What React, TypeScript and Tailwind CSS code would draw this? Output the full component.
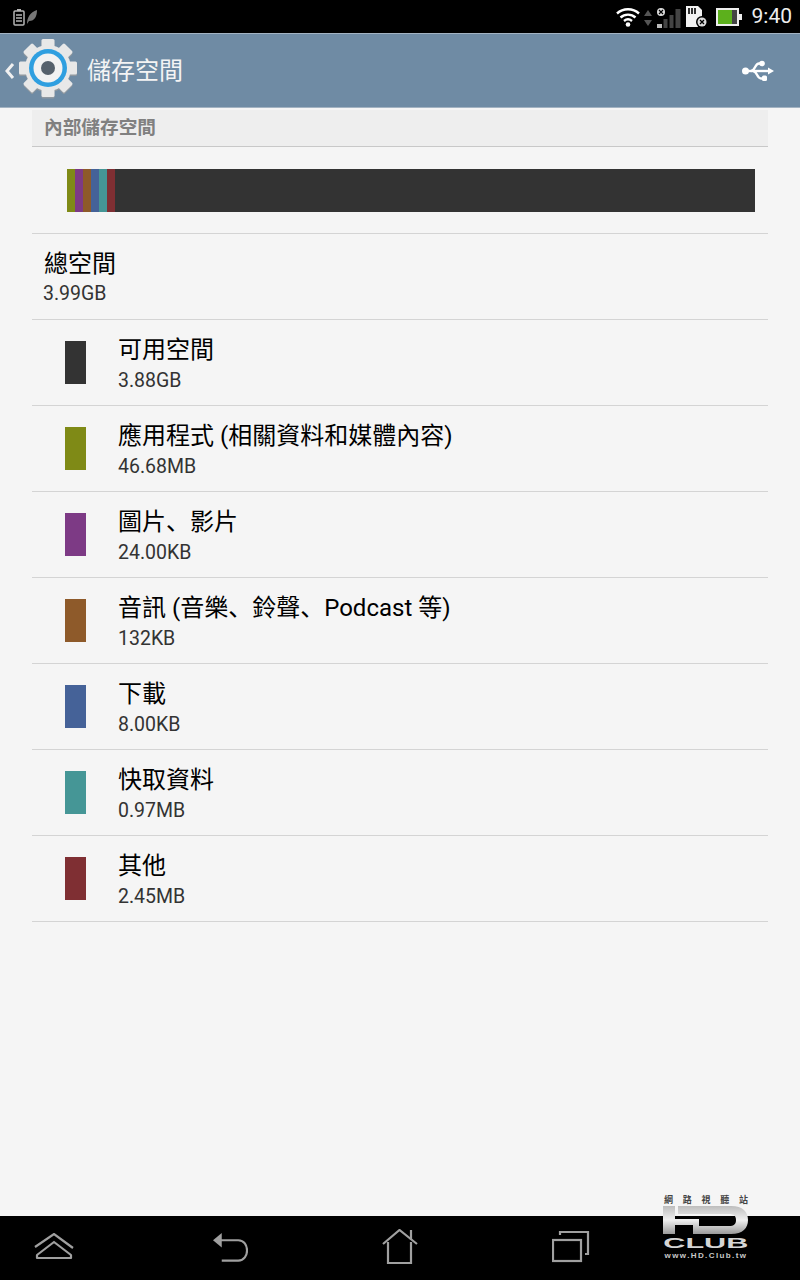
const font = "font-['Roboto','Noto_Sans_CJK_SC',sans-serif]";

const rows = [
  { label: '可用空間', size: '3.88GB', color: 'bg-[#333333]' },
  { label: '應用程式 (相關資料和媒體內容)', size: '46.68MB', color: 'bg-[#7f8a16]' },
  { label: '圖片、影片', size: '24.00KB', color: 'bg-[#7d3a85]' },
  { label: '音訊 (音樂、鈴聲、Podcast 等)', size: '132KB', color: 'bg-[#8e5a2a]' },
  { label: '下載', size: '8.00KB', color: 'bg-[#456298]' },
  { label: '快取資料', size: '0.97MB', color: 'bg-[#459696]' },
  { label: '其他', size: '2.45MB', color: 'bg-[#7f2f33]' },
];

const barColors = ['bg-[#7f8a16]', 'bg-[#7d3a85]', 'bg-[#8e5a2a]', 'bg-[#456298]', 'bg-[#459696]', 'bg-[#7f2f33]'];

const StatusLeft = () => (
  <svg width="26" height="20" viewBox="0 0 26 20" fill="none">
    <rect x="2" y="4" width="10" height="14" rx="1" stroke="#b5b5b5" strokeWidth="1.5" />
    <rect x="5" y="2" width="4" height="2" fill="#b5b5b5" />
    <path d="M4 8h6M4 11h6M4 14h6" stroke="#b5b5b5" strokeWidth="1.5" />
    <path d="M15 17c0-6 3-12 10-14 0 6-2 11-8 11z" fill="#777" />
  </svg>
);

const StatusRight = () => (
  <div className="flex items-center">
    <svg width="24" height="21" viewBox="0 0 24 21" fill="none" stroke="#fff" strokeWidth="2.4">
      <path d="M1 7.500c6-5.600 16-5.600 22 0" />
      <path d="M4.500 11.500c4.200-3.800 10.800-3.800 15 0" />
      <path d="M8 15c2.400-2 5.600-2 8 0" />
      <circle cx="12" cy="18.500" r="2.300" fill="#fff" stroke="none" />
    </svg>
    <svg className="ml-[4px]" width="8" height="20" viewBox="0 0 8 20" fill="#555">
      <path d="M4 3l4 6H0zM4 19l-4-6h8z" />
    </svg>
    <svg className="ml-[5px] mt-[3px]" width="24" height="22" viewBox="0 0 24 22">
      <rect x="0" y="17" width="5" height="4" fill="#bbb" />
      <rect x="6.500" y="12" width="4" height="9" fill="#444" />
      <rect x="12.500" y="8" width="4" height="13" fill="#444" />
      <rect x="18.500" y="2" width="5" height="19" fill="#444" />
      <circle cx="4" cy="5" r="4" fill="#ddd" />
      <path d="M2 3l4 4M6 3l-4 4" stroke="#000" strokeWidth="1.2" />
    </svg>
    <svg className="ml-[5px]" width="22" height="22" viewBox="0 0 22 22">
      <path d="M0 0h12l4 4v17H0z" fill="#f2f2f2" />
      <path d="M3 2v6M6 2v6M9 2v6" stroke="#000" strokeWidth="1.600" />
      <circle cx="16" cy="16" r="6" fill="#000" />
      <circle cx="16" cy="16" r="4.500" fill="#ddd" />
      <path d="M14 14l4 4M18 14l-4 4" stroke="#000" strokeWidth="1.300" />
    </svg>
    <svg className="ml-[8px]" width="26" height="18" viewBox="0 0 26 18">
      <rect x="0" y="0" width="23" height="18" fill="#eee" />
      <rect x="2" y="2" width="14" height="14" fill="#5cb01c" />
      <rect x="16" y="2" width="5" height="14" fill="#444" />
      <rect x="23" y="6" width="3" height="6" fill="#eee" />
    </svg>
    <span className="ml-[10px] text-[21px] leading-none text-[#eeeeee]">9:40</span>
  </div>
);

const teeth = [0, 45, 90, 135, 180, 225, 270, 315];

const GearShape = ({ fill, dy }: { fill: string; dy: number }) => (
  <g fill={fill} transform={`translate(0 ${dy})`}>
    {teeth.map((a) => (
      <rect key={a} x="23.500" y="1" width="13" height="14" rx="1.500" transform={`rotate(${a} 30 30)`} />
    ))}
    <circle cx="30" cy="30" r="23" />
  </g>
);

const Gear = () => (
  <svg width="60" height="62" viewBox="0 0 60 62">
    <GearShape fill="#8f98a0" dy={1.5} />
    <GearShape fill="#e8e8e8" dy={0} />
    <circle cx="30" cy="30" r="19" fill="#2f9fe0" />
    <circle cx="30" cy="30" r="14.500" fill="#f2f2f2" />
    <circle cx="30" cy="30" r="7" fill="#56616c" />
  </svg>
);

const UsbIcon = () => (
  <svg width="34" height="22" viewBox="0 0 34 22" fill="none" stroke="#fff" strokeWidth="2.400">
    <circle cx="4.500" cy="11" r="3.500" fill="#fff" stroke="none" />
    <path d="M5 11H29" />
    <path d="M10 11C14 11 14 3.500 18 3.500H21" />
    <path d="M12 11C16 11 16 18.500 20 18.500H23" />
    <circle cx="21" cy="3.500" r="2.800" fill="#fff" stroke="none" />
    <rect x="21" y="15.500" width="5" height="5.500" rx="1.500" fill="#fff" stroke="none" />
    <path d="M33 11l-6-3.500v7z" fill="#fff" stroke="none" />
  </svg>
);

const Recents = () => (
  <svg width="38" height="32" viewBox="0 0 38 32" fill="none" stroke="#a0a0a0" strokeWidth="2.200">
    <rect x="1" y="9" width="28" height="21" />
    <path d="M8 4V1h28v22h-3" />
  </svg>
);

const Watermark = () => (
  <div className="absolute right-[51px] top-[1196px] flex w-[86px] flex-col items-center">
    <div className="flex w-[84px] justify-between text-[9px] font-bold leading-[9px] text-[#444444]">
      <span>網</span><span>路</span><span>視</span><span>聽</span><span>站</span>
    </div>
    <svg className="mt-[1px]" width="86" height="28" viewBox="0 0 86 28">
      <defs>
        <linearGradient id="hd" x1="0" y1="0" x2="0" y2="1">
          <stop offset="0" stopColor="#bdbdbd" />
          <stop offset="0.5" stopColor="#f0f0f0" />
          <stop offset="1" stopColor="#9a9a9a" />
        </linearGradient>
      </defs>
      <path d="M0 0h12v28H0zM15 0H68C80 0 85 6 85 14C85 22 80 28 68 28H30V19H12V13H36V20H66C71 20 73 18 73 14C73 10 71 8 66 8H15z" fill="url(#hd)" />
    </svg>
    <div className="mt-[1px] text-[15px] font-bold leading-[15px] text-[#d5d5d5] font-['Liberation_Sans',sans-serif] [transform:scaleX(2.04)]">CLUB</div>
    <div className="mt-[1px] whitespace-nowrap text-[8px] font-bold leading-[9px] tracking-[1.400px] text-[#c8c8c8] font-['Liberation_Sans',sans-serif]">www.HD.Club.tw</div>
  </div>
);

export default function App() {
  return (
    <div className={`relative flex h-[1280px] w-[800px] flex-col overflow-hidden bg-[#f5f5f5] ${font}`}>
      <div className="flex h-[33px] items-center justify-between bg-black pl-[12px] pr-[8px]">
        <StatusLeft />
        <StatusRight />
      </div>

      <div className="flex h-[75px] items-center justify-between border-y border-y-[#a3b3c2] bg-[#6f8ba4] pl-[4px] pr-[25px]">
        <div className="flex items-center">
          <svg width="12" height="20" viewBox="0 0 12 20" fill="none" stroke="#f0f0f0" strokeWidth="3">
            <path d="M9 3L3 10l6 7" />
          </svg>
          <div className="mb-[3px] ml-[2px]"><Gear /></div>
          <span className="ml-[9px] text-[24px] leading-none text-[#f4f4f4]">儲存空間</span>
        </div>
        <UsbIcon />
      </div>

      <div className="mx-[32px] flex flex-1 flex-col">
        <div className="mt-[2px] flex h-[37px] items-center border-b border-b-[#c8c8c8] bg-[#eeeeee] pl-[12px] text-[18.670px] font-bold leading-none text-[#808080]">
          內部儲存空間
        </div>
        <div className="flex h-[87px] items-center border-b border-b-[#d4d4d4] pl-[35px] pr-[13px]">
          <div className="flex h-[43px] w-full bg-[#333333]">
            {barColors.map((c) => (
              <div key={c} className={`h-full w-[8px] ${c}`} />
            ))}
          </div>
        </div>
        <div className="flex h-[86px] flex-col border-b border-b-[#d4d4d4] pl-[11px] pt-[14px]">
          <span className="pl-[1px] text-[24px] leading-[32px] text-black">總空間</span>
          <span className="mt-[2px] text-[19.500px] leading-[24px] text-[#333333]">3.99GB</span>
        </div>
        {rows.map((row) => (
          <div key={row.label} className="flex h-[86px] items-center border-b border-b-[#d4d4d4] pl-[33px]">
            <div className={`h-[43px] w-[21px] ${row.color}`} />
            <div className="ml-[32px] flex flex-col pt-[2px]">
              <span className="text-[24px] leading-[32px] text-black">{row.label}</span>
              <span className="mt-[3px] text-[19.500px] leading-[24px] text-[#333333]">{row.size}</span>
            </div>
          </div>
        ))}
      </div>

      <div className="flex h-[64px] items-center bg-black pb-[2px] pl-[34px]">
        <svg width="40" height="28" viewBox="0 0 40 28" fill="none" stroke="#a0a0a0" strokeWidth="2.200">
          <path d="M1 14L20 1l19 14" />
          <path d="M3 25v-3L20 9l17 13v3z" strokeLinejoin="round" />
        </svg>
        <svg className="ml-[139px]" width="35" height="32" viewBox="0 0 36 32" fill="none" stroke="#a0a0a0" strokeWidth="2.200">
          <path d="M7 9h19c12 0 12 21 0 21H9" />
          <path d="M0 9L9 1.500v15z" fill="#a0a0a0" stroke="none" />
        </svg>
        <svg className="ml-[134px]" width="36" height="36" viewBox="0 0 36 36" fill="none" stroke="#a0a0a0" strokeWidth="2.200">
          <path d="M1 15L17.500 1 35 15" />
          <path d="M29 1v10" />
          <path d="M6 13v21h23V13" />
        </svg>
        <div className="ml-[134px]"><Recents /></div>
      </div>

      <Watermark />
    </div>
  );
}
